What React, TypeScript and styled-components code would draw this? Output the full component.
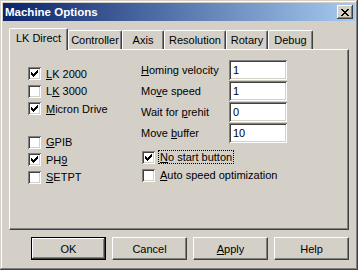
import React from "react";
import styled, { createGlobalStyle } from "styled-components";

const FACE = "#d4d0c8";
const FONT = `"Liberation Sans", Arial, sans-serif`;

const GlobalStyle = createGlobalStyle`
  html, body {
    margin: 0;
    padding: 0;
    background: ${FACE};
  }
  body {
    font-family: ${FONT};
    font-size: 11px;
    color: #000;
  }
`;

const TABS = ["LK Direct", "Controller", "Axis", "Resolution", "Rotary", "Debug"];
const TAB_WIDTHS = [59, 54, 42, 62, 42, 45];

export default function App() {
  return (
    <>
      <GlobalStyle />
      <Window>
        <TitleBar>
          <Title>Machine Options</Title>
          <CloseButton>
            <svg width="8" height="7" viewBox="0 0 8 7" shapeRendering="crispEdges">
              <path d="M0 0h2v1h1v1h2v-1h1v-1h2v1h-1v1h-1v1h-1v1h1v1h1v1h1v1h-2v-1h-1v-1h-2v1h-1v1h-2v-1h1v-1h1v-1h1v-1h-1v-1h-1v-1h-1z" fill="#000" />
            </svg>
          </CloseButton>
        </TitleBar>
        <Body>
          <TabStrip>
            {TABS.map((t, i) => (
              <Tab key={t} $active={i === 0} style={{ width: TAB_WIDTHS[i] }}>
                {t}
              </Tab>
            ))}
          </TabStrip>
          <Panel>
            <LeftColumn>
              <CheckGroup>
                <Check checked label={<><U>L</U>K 2000</>} />
                <Check label={<>L<U>K</U> 3000</>} />
                <Check checked label={<><U>M</U>icron Drive</>} />
              </CheckGroup>
              <CheckGroup>
                <Check label={<><U>G</U>PIB</>} />
                <Check checked label={<>PH<U>9</U></>} />
                <Check label={<><U>S</U>ETPT</>} />
              </CheckGroup>
            </LeftColumn>
            <RightColumn>
              <Fields>
                <FieldRow>
                  <FieldLabel><U>H</U>oming velocity</FieldLabel>
                  <Field readOnly value="1" />
                </FieldRow>
                <FieldRow>
                  <FieldLabel>Mo<U>v</U>e speed</FieldLabel>
                  <Field readOnly value="1" />
                </FieldRow>
                <FieldRow>
                  <FieldLabel>Wait for <U>p</U>rehit</FieldLabel>
                  <Field readOnly value="0" />
                </FieldRow>
                <FieldRow>
                  <FieldLabel>Move <U>b</U>uffer</FieldLabel>
                  <Field readOnly value="10" />
                </FieldRow>
              </Fields>
              <OptionGroup>
                <Check wide checked focused label={<><U>N</U>o start button</>} />
                <Check wide label={<><U>A</U>uto speed optimization</>} />
              </OptionGroup>
            </RightColumn>
          </Panel>
          <ButtonRow>
            <Button $default>OK</Button>
            <Button>Cancel</Button>
            <Button><U>A</U>pply</Button>
            <Button>Help</Button>
          </ButtonRow>
        </Body>
      </Window>
    </>
  );
}

function Check({ checked, label, wide, focused }: any) {
  return (
    <CheckRow $wide={wide}>
      <CheckBox>
        {checked && (
          <svg width="7" height="7" viewBox="0 0 7 7" shapeRendering="crispEdges">
            <path d="M6 0h1v3h-1v1h-1v1h-1v1h-1v1h-1v-1h-1v-1h-1v-3h1v1h1v1h1v-1h1v-1h1v-1h1z" fill="#000" />
          </svg>
        )}
      </CheckBox>
      <CheckLabel $focused={focused}>{label}</CheckLabel>
    </CheckRow>
  );
}

const Window = styled.div`
  width: 358px;
  height: 270px;
  box-sizing: border-box;
  padding: 3px;
  display: flex;
  flex-direction: column;
  background: ${FACE};
  box-shadow: inset -1px -1px #404040, inset 1px 1px ${FACE},
    inset -2px -2px #808080, inset 2px 2px #fff;
`;

const TitleBar = styled.div`
  height: 18px;
  display: flex;
  align-items: center;
  justify-content: space-between;
  padding: 0 2px;
  background: linear-gradient(to right, #0a246a, #a6caf0);
`;

const Title = styled.span`
  color: #fff;
  font-weight: bold;
  font-size: 11.5px;
`;

const CloseButton = styled.div`
  width: 16px;
  height: 14px;
  box-sizing: border-box;
  display: flex;
  align-items: center;
  justify-content: center;
  background: ${FACE};
  box-shadow: inset -1px -1px #404040, inset 1px 1px #fff,
    inset -2px -2px #808080;
`;

const Body = styled.div`
  flex: 1;
  display: flex;
  flex-direction: column;
  padding: 7px 6px 0 6px;
`;

const TabStrip = styled.div`
  display: flex;
  align-items: flex-end;
  height: 21px;
  position: relative;
  z-index: 1;
`;

const Tab = styled.div<{ $active?: boolean }>`
  box-sizing: border-box;
  height: ${(p) => (p.$active ? 22 : 19)}px;
  margin-bottom: ${(p) => (p.$active ? -1 : 0)}px;
  display: flex;
  align-items: ${(p) => (p.$active ? "flex-start" : "center")};
  padding-top: ${(p) => (p.$active ? 3 : 0)}px;
  justify-content: center;
  background: ${FACE};
  border-top: 1px solid #fff;
  border-left: 1px solid #fff;
  border-right: 1px solid #404040;
  border-radius: 2px 2px 0 0;
  box-shadow: inset -1px 0 #808080;
  white-space: nowrap;
`;

const Panel = styled.div`
  height: 181px;
  box-sizing: border-box;
  display: flex;
  padding: 10px 0 0 18px;
  border-top: 1px solid #fff;
  border-left: 1px solid #fff;
  border-right: 1px solid #404040;
  border-bottom: 1px solid #404040;
  box-shadow: inset -1px -1px #808080;
`;

const LeftColumn = styled.div`
  width: 113px;
  padding-top: 5px;
  display: flex;
  flex-direction: column;
  gap: 16px;
`;

const CheckGroup = styled.div`
  display: flex;
  flex-direction: column;
`;

const RightColumn = styled.div`
  display: flex;
  flex-direction: column;
`;

const Fields = styled.div`
  display: flex;
  flex-direction: column;
  gap: 1px;
`;

const FieldRow = styled.div`
  display: flex;
  align-items: center;
  height: 20px;
`;

const FieldLabel = styled.span`
  width: 88px;
`;

const Field = styled.input`
  width: 58px;
  height: 20px;
  box-sizing: border-box;
  border: none;
  outline: none;
  margin: 0;
  padding: 0 0 0 4px;
  background: #fff;
  font-family: ${FONT};
  font-size: 11px;
  color: #000;
  box-shadow: inset 1px 1px #808080, inset -1px -1px #fff,
    inset 2px 2px #404040, inset -2px -2px ${FACE};
`;

const OptionGroup = styled.div`
  margin-top: 5px;
  padding-left: 1px;
  display: flex;
  flex-direction: column;
`;

const CheckRow = styled.div<{ $wide?: boolean }>`
  display: flex;
  align-items: center;
  height: ${(p) => (p.$wide ? 18 : 17.5)}px;
`;

const CheckBox = styled.span`
  width: 13px;
  height: 13px;
  box-sizing: border-box;
  display: flex;
  align-items: center;
  justify-content: center;
  background: #fff;
  margin-right: 5px;
  box-shadow: inset 1px 1px #808080, inset -1px -1px #fff,
    inset 2px 2px #404040, inset -2px -2px ${FACE};
`;

const CheckLabel = styled.span<{ $focused?: boolean }>`
  padding: 0 1px;
  margin-left: -1px;
  outline: ${(p) => (p.$focused ? "1px dotted #000" : "none")};
  white-space: nowrap;
`;

const U = styled.span`
  text-decoration: underline;
`;

const ButtonRow = styled.div`
  display: flex;
  justify-content: flex-end;
  gap: 6px;
  margin-top: 7px;
`;

const Button = styled.div<{ $default?: boolean }>`
  width: 75px;
  height: 23px;
  box-sizing: border-box;
  display: flex;
  align-items: center;
  justify-content: center;
  background: ${FACE};
  border: 1px solid ${(p) => (p.$default ? "#000" : "transparent")};
  box-shadow: ${(p) =>
    p.$default
      ? `inset -1px -1px #404040, inset 1px 1px #fff, inset -2px -2px #808080`
      : `inset -1px -1px #808080`};
  ${(p) =>
    !p.$default &&
    `border-top-color: #fff; border-left-color: #fff; border-right-color: #404040; border-bottom-color: #404040;`}
`;
